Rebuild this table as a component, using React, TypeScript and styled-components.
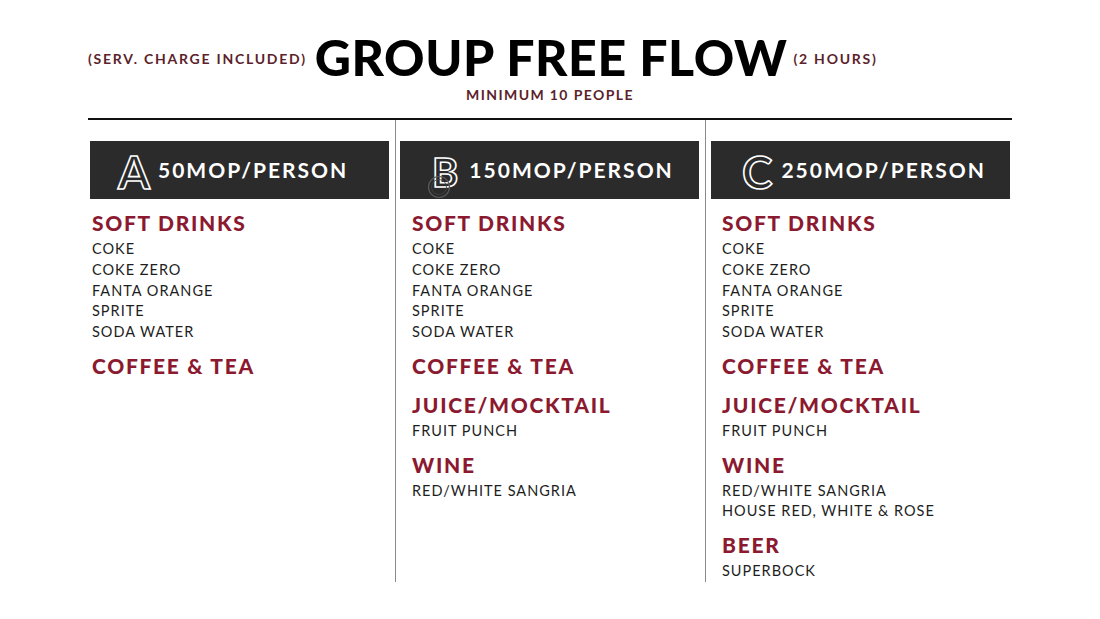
import React from "react";
import styled, { createGlobalStyle } from "styled-components";

const Global = createGlobalStyle`
  html, body { margin: 0; padding: 0; background: #fff; }
  body { font-family: Lato, "Open Sans", sans-serif; }
`;

const Page = styled.div`
  width: 924px;
  margin: 0 auto;
  padding-top: 32px;
`;

const TitleRow = styled.div`
  display: grid;
  grid-template-columns: 1fr auto 1fr;
  align-items: center;
`;

const SideLabel = styled.span<{ $side: "left" | "right" }>`
  justify-self: ${(p) => (p.$side === "left" ? "end" : "start")};
  margin: ${(p) => (p.$side === "left" ? "4px 12px 0 0" : "4px 0 0 6px")};
  white-space: nowrap;
  font-size: 14px;
  font-weight: 700;
  letter-spacing: 1.75px;
  color: #5c1f2b;
  line-height: 14px;
`;

const Title = styled.h1`
  margin: 0 0 0 -4px;
  font-size: 50px;
  line-height: 50px;
  font-weight: 900;
  letter-spacing: 0.6px;
  color: #000;
  white-space: nowrap;
`;

const Subtitle = styled.div`
  margin-top: 6px;
  text-align: center;
  font-size: 14px;
  line-height: 14px;
  font-weight: 700;
  letter-spacing: 1.4px;
  color: #5c1f2b;
`;

const Columns = styled.div`
  margin-top: 16px;
  border-top: 2px solid #111;
  display: grid;
  grid-template-columns: 307px 310px 307px;
`;

const Column = styled.div<{ $boxInset: number; $textInset: number; $divider?: boolean }>`
  border-left: ${(p) => (p.$divider ? "1px solid #8a8a8a" : "none")};
  padding: 21px 0 0 ${(p) => p.$boxInset}px;
  --text-inset: ${(p) => p.$textInset - p.$boxInset}px;
`;

const PriceBox = styled.div<{ $pad: number }>`
  position: relative;
  width: 299px;
  height: 58px;
  box-sizing: border-box;
  background: #2b2b2b;
  display: flex;
  align-items: center;
  padding-left: ${(p) => p.$pad}px;
`;

const TierLetter = styled.span<{ $size: number; $gap: number }>`
  font-size: ${(p) => p.$size}px;
  line-height: 1;
  font-weight: 700;
  color: #2b2b2b;
  -webkit-text-stroke: 1.6px #fff;
  margin-right: ${(p) => p.$gap}px;
  margin-top: 4px;
`;

const Price = styled.span`
  font-size: 21px;
  font-weight: 700;
  letter-spacing: 2px;
  color: #fff;
  margin-bottom: 2px;
`;

const Stamp = styled.svg`
  position: absolute;
  left: 27px;
  top: 34px;
`;

const Menu = styled.div`
  padding-left: var(--text-inset);
  margin-top: 11px;
`;

const Section = styled.section<{ $empty?: boolean }>`
  margin-bottom: ${(p) => (p.$empty ? 13 : 10)}px;
  &:last-child { margin-bottom: 0; }
`;

const Heading = styled.h2`
  margin: 0 0 3px;
  font-size: 21px;
  line-height: 26px;
  font-weight: 900;
  letter-spacing: 1.7px;
  color: #8b1a30;
`;

const Item = styled.div`
  font-size: 14.5px;
  line-height: 20.75px;
  font-weight: 400;
  letter-spacing: 1px;
  color: #1e1e1e;
`;

type Sec = { title: string; items: string[] };

const soft: Sec = {
  title: "SOFT DRINKS",
  items: ["COKE", "COKE ZERO", "FANTA ORANGE", "SPRITE", "SODA WATER"],
};
const coffee: Sec = { title: "COFFEE & TEA", items: [] };
const juice: Sec = { title: "JUICE/MOCKTAIL", items: ["FRUIT PUNCH"] };

const tiers = [
  {
    letter: "A",
    price: "50MOP/PERSON",
    boxInset: 2,
    textInset: 4,
    pad: 28,
    size: 46,
    gap: 8,
    sections: [soft, coffee],
  },
  {
    letter: "B",
    price: "150MOP/PERSON",
    boxInset: 4,
    textInset: 16,
    pad: 32,
    size: 40,
    gap: 11,
    stamp: true,
    sections: [soft, coffee, juice, { title: "WINE", items: ["RED/WHITE SANGRIA"] }],
  },
  {
    letter: "C",
    price: "250MOP/PERSON",
    boxInset: 5,
    textInset: 16,
    pad: 31,
    size: 46,
    gap: 9,
    sections: [
      soft,
      coffee,
      juice,
      { title: "WINE", items: ["RED/WHITE SANGRIA", "HOUSE RED, WHITE & ROSE"] },
      { title: "BEER", items: ["SUPERBOCK"] },
    ],
  },
];

export default function App() {
  return (
    <>
      <Global />
      <Page>
        <TitleRow>
          <SideLabel $side="left">(SERV. CHARGE INCLUDED)</SideLabel>
          <Title>GROUP FREE FLOW</Title>
          <SideLabel $side="right">(2 HOURS)</SideLabel>
        </TitleRow>
        <Subtitle>MINIMUM 10 PEOPLE</Subtitle>
        <Columns>
          {tiers.map((t, i) => (
            <Column key={t.letter} $boxInset={t.boxInset} $textInset={t.textInset} $divider={i > 0}>
              <PriceBox $pad={t.pad}>
                <TierLetter $size={t.size} $gap={t.gap}>{t.letter}</TierLetter>
                <Price>{t.price}</Price>
                {t.stamp && (
                  <Stamp width="24" height="24" viewBox="0 0 24 24">
                    <circle cx="12" cy="12" r="10.5" fill="none" stroke="#5a5a5a" strokeWidth="1.2" />
                    <circle cx="12" cy="12" r="7.5" fill="none" stroke="#444" strokeWidth="0.8" />
                  </Stamp>
                )}
              </PriceBox>
              <Menu>
                {t.sections.map((s) => (
                  <Section key={s.title} $empty={s.items.length === 0}>
                    <Heading>{s.title}</Heading>
                    {s.items.map((it) => (
                      <Item key={it}>{it}</Item>
                    ))}
                  </Section>
                ))}
              </Menu>
            </Column>
          ))}
        </Columns>
      </Page>
    </>
  );
}
